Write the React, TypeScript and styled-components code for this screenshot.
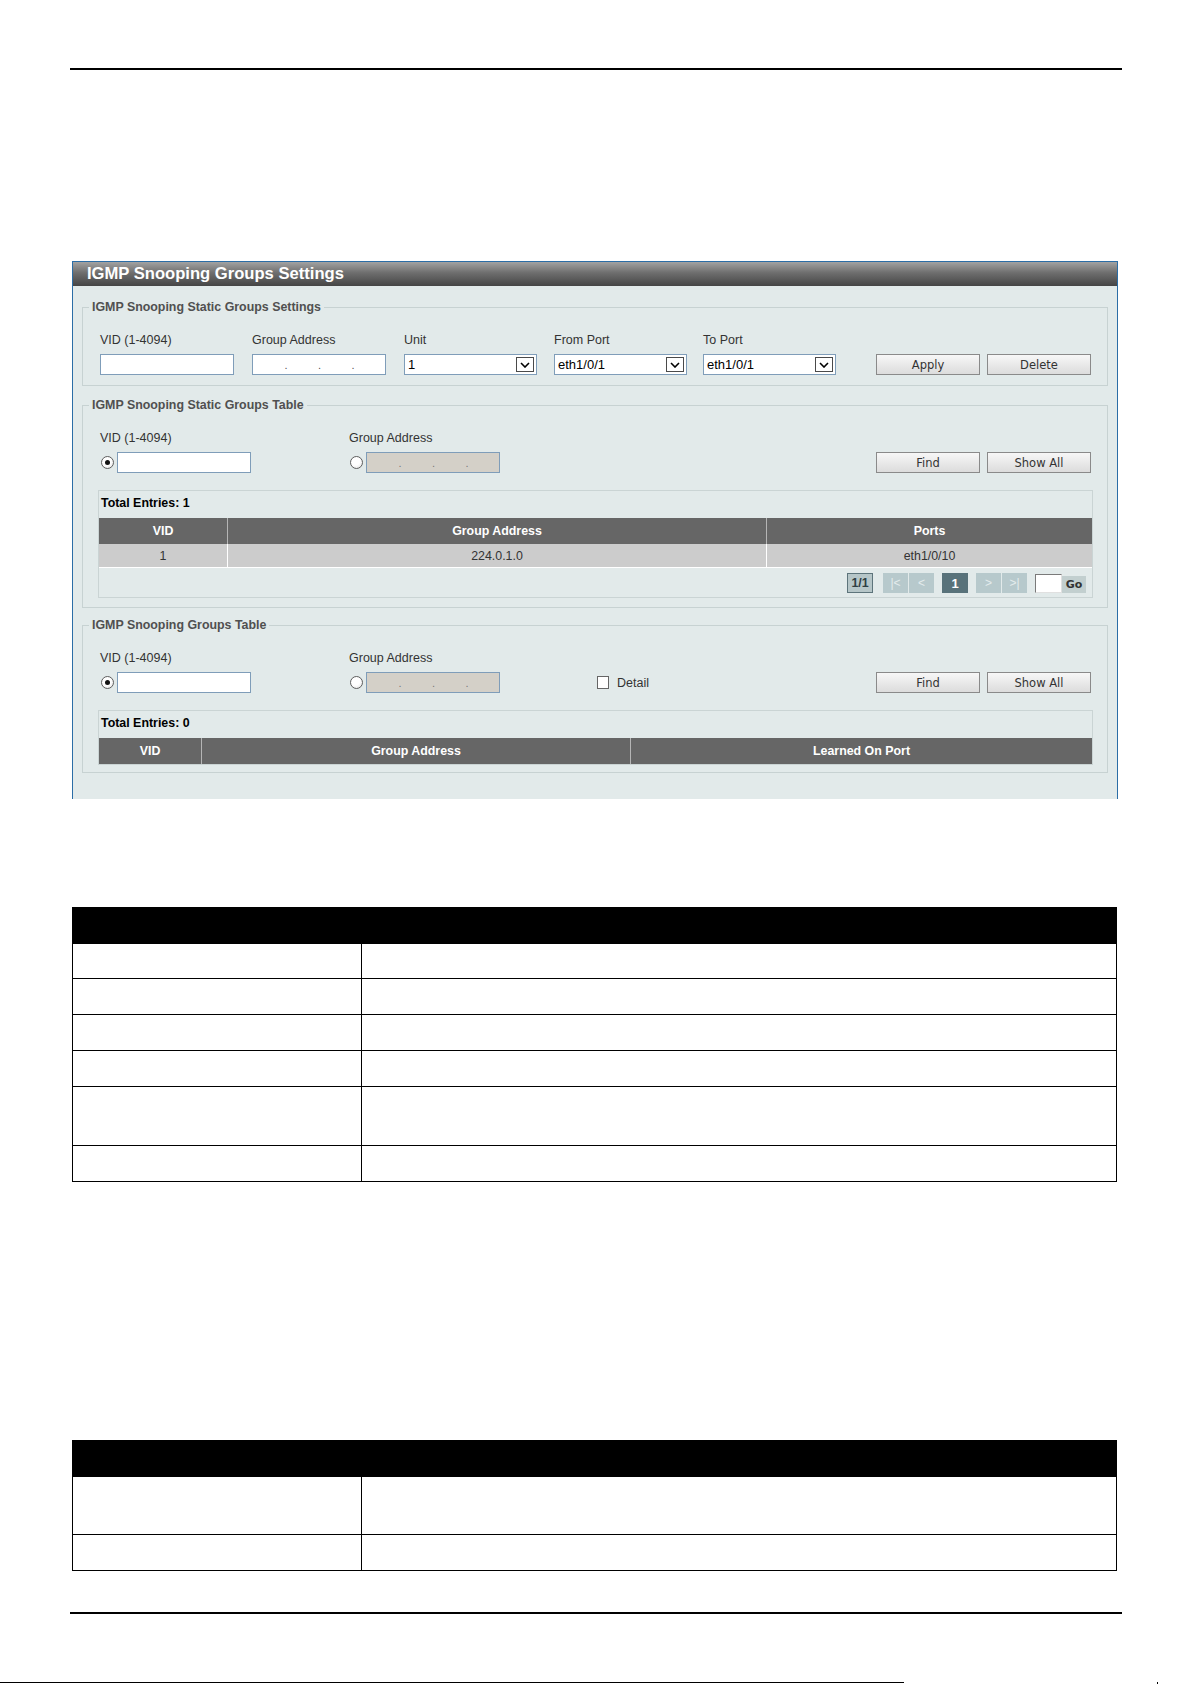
import React from "react";
import styled, { createGlobalStyle } from "styled-components";

const GlobalStyle = createGlobalStyle`
  html, body { margin: 0; padding: 0; background: #fff; overflow: hidden; }
  body { font-family: "Liberation Sans", Arial, sans-serif; }
  * { box-sizing: border-box; }
`;

const Page = styled.div`
  width: 1192px;
  padding: 0 70px;
`;

const Rule = styled.div<{ $top: number }>`
  margin-top: ${(p) => p.$top}px;
  height: 2px;
  background: #000;
`;

/* ---------- device web UI panel ---------- */

const Panel = styled.section`
  margin: 191px 4px 0 2px;
  border: 1px solid #2b6da6;
  border-bottom: none;
  background: #e2eaea;
`;

const TitleBar = styled.h2`
  margin: 0;
  height: 24px;
  padding-left: 14px;
  line-height: 24px;
  font-size: 16.6px;
  font-weight: bold;
  color: #fff;
  background: linear-gradient(#a2a2a2 0%, #6e6e6e 45%, #454545 100%);
`;

const PanelBody = styled.div`
  padding: 14px 9px 26px;
`;

const Group = styled.fieldset<{ $gap: number; $pb: number }>`
  margin: ${(p) => p.$gap}px 0 0;
  min-width: 0;
  border: 1px solid #c7d2d2;
  padding: 19px 14px ${(p) => p.$pb}px 15px;
`;

const Legend = styled.legend`
  margin-left: -9px;
  padding: 0 3px;
  font-size: 12.4px;
  line-height: 14px;
  font-weight: bold;
  color: #505050;
`;

const FormRow = styled.div`
  display: flex;
  align-items: flex-end;
  padding: 0 2px;
`;

const Field = styled.div<{ $w?: number }>`
  display: flex;
  flex-direction: column;
  ${(p) => (p.$w ? `width: ${p.$w}px;` : "")}
  flex: none;
`;

const Label = styled.span`
  font-size: 12.5px;
  line-height: 14px;
  color: #333;
  margin-bottom: 7px;
  white-space: nowrap;
`;

const Control = styled.div`
  display: flex;
  align-items: center;
  height: 21px;
`;

const TextInput = styled.input`
  width: 134px;
  height: 21px;
  margin: 0;
  padding: 0 3px;
  border: 1px solid #7f9db9;
  background: #fff;
  font-family: "Liberation Sans", Arial, sans-serif;
  font-size: 12.5px;
  outline: none;
`;

const IpBox = styled.div<{ $disabled?: boolean }>`
  width: 134px;
  height: 21px;
  border: 1px solid #7f9db9;
  background: ${(p) => (p.$disabled ? "#d4d0c8" : "#fff")};
  display: flex;
  justify-content: space-evenly;
  align-items: center;
  font-size: 11px;
  color: ${(p) => (p.$disabled ? "#7a7a7a" : "#555")};
`;

const IpDot = styled.span`
  width: 2px;
  line-height: 1;
  text-align: center;
  transform: translateY(1px);
`;

const SelectBox = styled.div`
  width: 133px;
  height: 21px;
  border: 1px solid #7f9db9;
  background: #fff;
  display: flex;
  align-items: center;
  padding-left: 3px;
  font-size: 13px;
  color: #000;
`;

const SelectText = styled.span`
  flex: 1;
`;

const ArrowBox = styled.span`
  width: 18px;
  height: 15px;
  margin-right: 2px;
  border: 1px solid #4a4a4a;
  background: #fff;
  display: flex;
  align-items: center;
  justify-content: center;
`;

const Radio = styled.span<{ $checked?: boolean }>`
  position: relative;
  width: 13px;
  height: 13px;
  margin: 0 3px 0 1px;
  border: 1px solid #5e5e5e;
  border-radius: 50%;
  background: radial-gradient(circle at 40% 35%, #fff 45%, #dedede 100%);
  flex: none;
  &::after {
    content: "";
    display: ${(p) => (p.$checked ? "block" : "none")};
    position: absolute;
    left: 3px;
    top: 3px;
    width: 5px;
    height: 5px;
    border-radius: 50%;
    background: #111;
  }
`;

const CheckBox = styled.span`
  width: 12px;
  height: 13px;
  border: 1px solid #666;
  background: #fff;
  flex: none;
`;

const CheckText = styled.span`
  margin-left: 8px;
  font-size: 12.5px;
  color: #333;
`;

const Actions = styled.div`
  margin-left: auto;
  display: flex;
  gap: 7px;
`;

const Button = styled.button`
  width: 104px;
  height: 21px;
  margin: 0;
  padding: 0;
  border: 1px solid #8a8a8a;
  background: linear-gradient(#f7f7f7, #dcdcdc);
  font-family: "DejaVu Sans", Tahoma, sans-serif;
  font-size: 11.5px;
  color: #333;
`;

const ResultBox = styled.div`
  margin-top: 17px;
  border: 1px solid #cad4d4;
`;

const TotalRow = styled.div`
  padding: 5px 2px 8px;
  font-size: 12.4px;
  line-height: 14px;
  font-weight: bold;
  color: #000;
`;

const DataGrid = styled.div<{ $cols: string }>`
  display: grid;
  grid-template-columns: ${(p) => p.$cols};
`;

const HeadCell = styled.div`
  height: 26px;
  background: #666;
  color: #fff;
  font-size: 12.4px;
  font-weight: bold;
  display: flex;
  align-items: center;
  justify-content: center;
  & + & {
    border-left: 1px solid #b5b5b5;
  }
`;

const BodyCell = styled.div<{ $first?: boolean }>`
  height: 24px;
  background: #cccccc;
  color: #333;
  font-size: 12.4px;
  display: flex;
  align-items: center;
  justify-content: center;
  border-bottom: 1px solid #fff;
  border-left: ${(p) => (p.$first ? "none" : "1px solid #fff")};
`;

const Pager = styled.div`
  display: flex;
  justify-content: flex-end;
  align-items: flex-end;
  gap: 8px;
  padding: 5px 6px 4px 0;
`;

const PageInfo = styled.span`
  width: 26px;
  height: 20px;
  margin-right: 2px;
  border: 1px solid #5d747b;
  background: #b6c6c8;
  color: #2f3f44;
  font-size: 12.4px;
  font-weight: bold;
  display: flex;
  align-items: center;
  justify-content: center;
`;

const NavPair = styled.span`
  display: flex;
  gap: 1px;
`;

const NavButton = styled.span`
  width: 25px;
  height: 20px;
  background: #b7c9cc;
  color: #e4ecec;
  font-size: 12px;
  display: flex;
  align-items: center;
  justify-content: center;
`;

const CurrentPage = styled.span`
  width: 26px;
  height: 20px;
  background: #58727a;
  color: #fff;
  font-size: 13px;
  font-weight: bold;
  display: flex;
  align-items: center;
  justify-content: center;
`;

const GoGroup = styled.span`
  display: flex;
  align-items: flex-end;
`;

const PageInput = styled.input`
  width: 27px;
  height: 19px;
  margin: 0;
  padding: 0;
  border: 1px solid #e0e0e0;
  border-top-color: #7a7a7a;
  border-left-color: #7a7a7a;
  background: #fff;
  outline: none;
`;

const GoButton = styled.button`
  width: 24px;
  height: 17px;
  margin: 0;
  padding: 0;
  border: none;
  background: #c2cfcf;
  font-family: "DejaVu Sans", Tahoma, sans-serif;
  font-size: 11px;
  font-weight: bold;
  color: #333;
`;

/* ---------- parameter description tables ---------- */

const DocTable = styled.div<{ $top: number }>`
  margin: ${(p) => p.$top}px 0 0 2px;
  width: 1045px;
`;

const DocHead = styled.div`
  height: 37px;
  background: #000;
`;

const DocRow = styled.div<{ $h: number }>`
  display: grid;
  grid-template-columns: 288px 1fr;
  height: ${(p) => p.$h}px;
  border: 1px solid #000;
  border-top: none;
`;

const DocCell = styled.div`
  & + & {
    border-left: 1px solid #000;
  }
`;

const PageFoot = styled.div`
  margin: 68px 0 0 -70px;
  width: 1192px;
  height: 2px;
  display: flex;
  align-items: flex-start;
`;

const FootLine = styled.div`
  width: 904px;
  height: 1px;
  background: #000;
`;

const FootTick = styled.div`
  margin-left: 253px;
  width: 1px;
  height: 2px;
  background: #000;
`;

/* ---------- small composed parts ---------- */

const Chevron = () => (
  <svg width="10" height="6" viewBox="0 0 10 6">
    <polyline points="1,1 5,5 9,1" fill="none" stroke="#000" strokeWidth="1.6" />
  </svg>
);

const Select = ({ value }: { value: string }) => (
  <SelectBox>
    <SelectText>{value}</SelectText>
    <ArrowBox>
      <Chevron />
    </ArrowBox>
  </SelectBox>
);

const IpAddress = ({ disabled }: { disabled?: boolean }) => (
  <IpBox $disabled={disabled}>
    <IpDot>.</IpDot>
    <IpDot>.</IpDot>
    <IpDot>.</IpDot>
  </IpBox>
);

const Pagination = () => (
  <Pager>
    <PageInfo>1/1</PageInfo>
    <NavPair>
      <NavButton>|&lt;</NavButton>
      <NavButton>&lt;</NavButton>
    </NavPair>
    <CurrentPage>1</CurrentPage>
    <NavPair>
      <NavButton>&gt;</NavButton>
      <NavButton>&gt;|</NavButton>
    </NavPair>
    <GoGroup>
      <PageInput readOnly />
      <GoButton>Go</GoButton>
    </GoGroup>
  </Pager>
);

const SearchFields = () => (
  <>
    <Field $w={249}>
      <Label>VID (1-4094)</Label>
      <Control>
        <Radio $checked />
        <TextInput readOnly />
      </Control>
    </Field>
    <Field $w={248}>
      <Label>Group Address</Label>
      <Control>
        <Radio />
        <IpAddress disabled />
      </Control>
    </Field>
  </>
);

const docRowsA = [35, 36, 36, 36, 59, 36];
const docRowsB = [58, 36];

const Doc = ({ top, rows }: { top: number; rows: number[] }) => (
  <DocTable $top={top}>
    <DocHead />
    {rows.map((h, i) => (
      <DocRow key={i} $h={h}>
        <DocCell />
        <DocCell />
      </DocRow>
    ))}
  </DocTable>
);

export default function App() {
  return (
    <>
      <GlobalStyle />
      <Page>
        <Rule $top={68} />

        <Panel>
          <TitleBar>IGMP Snooping Groups Settings</TitleBar>
          <PanelBody>
            <Group $gap={0} $pb={10}>
              <Legend>IGMP Snooping Static Groups Settings</Legend>
              <FormRow>
                <Field $w={152}>
                  <Label>VID (1-4094)</Label>
                  <TextInput readOnly />
                </Field>
                <Field $w={152}>
                  <Label>Group Address</Label>
                  <IpAddress />
                </Field>
                <Field $w={150}>
                  <Label>Unit</Label>
                  <Select value="1" />
                </Field>
                <Field $w={149}>
                  <Label>From Port</Label>
                  <Select value="eth1/0/1" />
                </Field>
                <Field>
                  <Label>To Port</Label>
                  <Select value="eth1/0/1" />
                </Field>
                <Actions>
                  <Button>Apply</Button>
                  <Button>Delete</Button>
                </Actions>
              </FormRow>
            </Group>

            <Group $gap={12} $pb={9}>
              <Legend>IGMP Snooping Static Groups Table</Legend>
              <FormRow>
                <SearchFields />
                <Actions>
                  <Button>Find</Button>
                  <Button>Show All</Button>
                </Actions>
              </FormRow>
              <ResultBox>
                <TotalRow>Total Entries: 1</TotalRow>
                <DataGrid $cols="128px 539px 1fr">
                  <HeadCell>VID</HeadCell>
                  <HeadCell>Group Address</HeadCell>
                  <HeadCell>Ports</HeadCell>
                  <BodyCell $first>1</BodyCell>
                  <BodyCell>224.0.1.0</BodyCell>
                  <BodyCell>eth1/0/10</BodyCell>
                </DataGrid>
                <Pagination />
              </ResultBox>
            </Group>

            <Group $gap={10} $pb={7}>
              <Legend>IGMP Snooping Groups Table</Legend>
              <FormRow>
                <SearchFields />
                <Field>
                  <Control>
                    <CheckBox />
                    <CheckText>Detail</CheckText>
                  </Control>
                </Field>
                <Actions>
                  <Button>Find</Button>
                  <Button>Show All</Button>
                </Actions>
              </FormRow>
              <ResultBox>
                <TotalRow>Total Entries: 0</TotalRow>
                <DataGrid $cols="102px 429px 1fr">
                  <HeadCell>VID</HeadCell>
                  <HeadCell>Group Address</HeadCell>
                  <HeadCell>Learned On Port</HeadCell>
                </DataGrid>
              </ResultBox>
            </Group>
          </PanelBody>
        </Panel>

        <Doc top={108} rows={docRowsA} />
        <Doc top={258} rows={docRowsB} />

        <Rule $top={41} />
        <PageFoot>
          <FootLine />
          <FootTick />
        </PageFoot>
      </Page>
    </>
  );
}
